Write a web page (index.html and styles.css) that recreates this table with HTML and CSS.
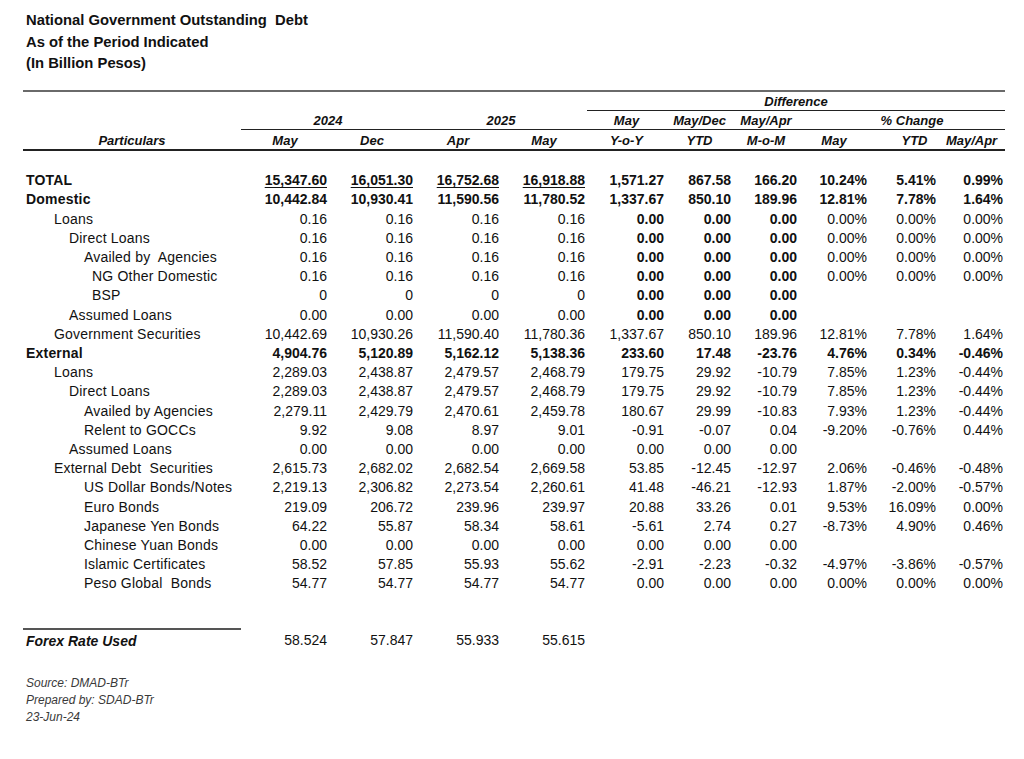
FILE: index.html
```html
<!DOCTYPE html>
<html lang="en">
<head>
<meta charset="utf-8">
<title>National Government Outstanding Debt</title>
<link rel="stylesheet" href="styles.css">
</head>
<body>
<div class="page">
  <header class="title">
    <div>National Government Outstanding&nbsp; Debt</div>
    <div>As of the Period Indicated</div>
    <div>(In Billion Pesos)</div>
  </header>

  <table class="debt">
    <colgroup>
      <col class="c-label">
      <col class="c-first">
      <col class="c-lvl">
      <col class="c-lvl">
      <col class="c-lvl">
      <col class="c-yoy">
      <col class="c-ytd">
      <col class="c-mom">
      <col class="c-p1">
      <col class="c-p2">
      <col class="c-p3">
    </colgroup>
    <thead>
      <tr class="h1">
        <th colspan="5"></th>
        <th colspan="6" class="u">Difference</th>
      </tr>
      <tr class="h2">
        <th></th>
        <th colspan="2" class="u">2024</th>
        <th colspan="2" class="u">2025</th>
        <th class="u">May</th>
        <th class="u">May/Dec</th>
        <th class="u">May/Apr</th>
        <th colspan="3" class="u pc">% Change</th>
      </tr>
      <tr class="h3">
        <th>Particulars</th>
        <th>May</th>
        <th>Dec</th>
        <th>Apr</th>
        <th>May</th>
        <th>Y-o-Y</th>
        <th>YTD</th>
        <th>M-o-M</th>
        <th>May</th>
        <th class="ytdp">YTD</th>
        <th>May/Apr</th>
      </tr>
    </thead>
    <tbody>
      <tr class="spacer"><td colspan="11"></td></tr>
      <tr class="bold total">
        <td class="l0">TOTAL</td>
        <td><span class="ul">15,347.60</span></td><td><span class="ul">16,051.30</span></td><td><span class="ul">16,752.68</span></td><td><span class="ul">16,918.88</span></td>
        <td>1,571.27</td><td>867.58</td><td>166.20</td>
        <td>10.24%</td><td>5.41%</td><td>0.99%</td>
      </tr>
      <tr class="bold">
        <td class="l0">Domestic</td>
        <td>10,442.84</td><td>10,930.41</td><td>11,590.56</td><td>11,780.52</td>
        <td>1,337.67</td><td>850.10</td><td>189.96</td>
        <td>12.81%</td><td>7.78%</td><td>1.64%</td>
      </tr>
      <tr>
        <td class="l1">Loans</td>
        <td>0.16</td><td>0.16</td><td>0.16</td><td>0.16</td>
        <td class="b">0.00</td><td class="b">0.00</td><td class="b">0.00</td>
        <td>0.00%</td><td>0.00%</td><td>0.00%</td>
      </tr>
      <tr>
        <td class="l2">Direct Loans</td>
        <td>0.16</td><td>0.16</td><td>0.16</td><td>0.16</td>
        <td class="b">0.00</td><td class="b">0.00</td><td class="b">0.00</td>
        <td>0.00%</td><td>0.00%</td><td>0.00%</td>
      </tr>
      <tr>
        <td class="l3">Availed by&nbsp; Agencies</td>
        <td>0.16</td><td>0.16</td><td>0.16</td><td>0.16</td>
        <td class="b">0.00</td><td class="b">0.00</td><td class="b">0.00</td>
        <td>0.00%</td><td>0.00%</td><td>0.00%</td>
      </tr>
      <tr>
        <td class="l4">NG Other Domestic</td>
        <td>0.16</td><td>0.16</td><td>0.16</td><td>0.16</td>
        <td class="b">0.00</td><td class="b">0.00</td><td class="b">0.00</td>
        <td>0.00%</td><td>0.00%</td><td>0.00%</td>
      </tr>
      <tr>
        <td class="l4">BSP</td>
        <td>0</td><td>0</td><td>0</td><td>0</td>
        <td class="b">0.00</td><td class="b">0.00</td><td class="b">0.00</td>
        <td></td><td></td><td></td>
      </tr>
      <tr>
        <td class="l2">Assumed Loans</td>
        <td>0.00</td><td>0.00</td><td>0.00</td><td>0.00</td>
        <td class="b">0.00</td><td class="b">0.00</td><td class="b">0.00</td>
        <td></td><td></td><td></td>
      </tr>
      <tr>
        <td class="l1">Government Securities</td>
        <td>10,442.69</td><td>10,930.26</td><td>11,590.40</td><td>11,780.36</td>
        <td>1,337.67</td><td>850.10</td><td>189.96</td>
        <td>12.81%</td><td>7.78%</td><td>1.64%</td>
      </tr>
      <tr class="bold">
        <td class="l0">External</td>
        <td>4,904.76</td><td>5,120.89</td><td>5,162.12</td><td>5,138.36</td>
        <td>233.60</td><td>17.48</td><td>-23.76</td>
        <td>4.76%</td><td>0.34%</td><td>-0.46%</td>
      </tr>
      <tr>
        <td class="l1">Loans</td>
        <td>2,289.03</td><td>2,438.87</td><td>2,479.57</td><td>2,468.79</td>
        <td>179.75</td><td>29.92</td><td>-10.79</td>
        <td>7.85%</td><td>1.23%</td><td>-0.44%</td>
      </tr>
      <tr>
        <td class="l2">Direct Loans</td>
        <td>2,289.03</td><td>2,438.87</td><td>2,479.57</td><td>2,468.79</td>
        <td>179.75</td><td>29.92</td><td>-10.79</td>
        <td>7.85%</td><td>1.23%</td><td>-0.44%</td>
      </tr>
      <tr>
        <td class="l3">Availed by Agencies</td>
        <td>2,279.11</td><td>2,429.79</td><td>2,470.61</td><td>2,459.78</td>
        <td>180.67</td><td>29.99</td><td>-10.83</td>
        <td>7.93%</td><td>1.23%</td><td>-0.44%</td>
      </tr>
      <tr>
        <td class="l3">Relent to GOCCs</td>
        <td>9.92</td><td>9.08</td><td>8.97</td><td>9.01</td>
        <td>-0.91</td><td>-0.07</td><td>0.04</td>
        <td>-9.20%</td><td>-0.76%</td><td>0.44%</td>
      </tr>
      <tr>
        <td class="l2">Assumed Loans</td>
        <td>0.00</td><td>0.00</td><td>0.00</td><td>0.00</td>
        <td>0.00</td><td>0.00</td><td>0.00</td>
        <td></td><td></td><td></td>
      </tr>
      <tr>
        <td class="l1">External Debt&nbsp; Securities</td>
        <td>2,615.73</td><td>2,682.02</td><td>2,682.54</td><td>2,669.58</td>
        <td>53.85</td><td>-12.45</td><td>-12.97</td>
        <td>2.06%</td><td>-0.46%</td><td>-0.48%</td>
      </tr>
      <tr>
        <td class="l3">US Dollar Bonds/Notes</td>
        <td>2,219.13</td><td>2,306.82</td><td>2,273.54</td><td>2,260.61</td>
        <td>41.48</td><td>-46.21</td><td>-12.93</td>
        <td>1.87%</td><td>-2.00%</td><td>-0.57%</td>
      </tr>
      <tr>
        <td class="l3">Euro Bonds</td>
        <td>219.09</td><td>206.72</td><td>239.96</td><td>239.97</td>
        <td>20.88</td><td>33.26</td><td>0.01</td>
        <td>9.53%</td><td>16.09%</td><td>0.00%</td>
      </tr>
      <tr>
        <td class="l3">Japanese Yen Bonds</td>
        <td>64.22</td><td>55.87</td><td>58.34</td><td>58.61</td>
        <td>-5.61</td><td>2.74</td><td>0.27</td>
        <td>-8.73%</td><td>4.90%</td><td>0.46%</td>
      </tr>
      <tr>
        <td class="l3">Chinese Yuan Bonds</td>
        <td>0.00</td><td>0.00</td><td>0.00</td><td>0.00</td>
        <td>0.00</td><td>0.00</td><td>0.00</td>
        <td></td><td></td><td></td>
      </tr>
      <tr>
        <td class="l3">Islamic Certificates</td>
        <td>58.52</td><td>57.85</td><td>55.93</td><td>55.62</td>
        <td>-2.91</td><td>-2.23</td><td>-0.32</td>
        <td>-4.97%</td><td>-3.86%</td><td>-0.57%</td>
      </tr>
      <tr>
        <td class="l3">Peso Global&nbsp; Bonds</td>
        <td>54.77</td><td>54.77</td><td>54.77</td><td>54.77</td>
        <td>0.00</td><td>0.00</td><td>0.00</td>
        <td>0.00%</td><td>0.00%</td><td>0.00%</td>
      </tr>
      <tr class="spacer2"><td colspan="11"></td></tr>
      <tr class="forex">
        <td class="l0 fx-label">Forex Rate Used</td>
        <td>58.524</td><td>57.847</td><td>55.933</td><td>55.615</td>
        <td></td><td></td><td></td><td></td><td></td><td></td>
      </tr>
    </tbody>
  </table>

  <footer class="notes">
    <div>Source: DMAD-BTr</div>
    <div>Prepared by: SDAD-BTr</div>
    <div>23-Jun-24</div>
  </footer>
</div>
</body>
</html>
```

FILE: styles.css
```css
* { box-sizing: border-box; }

html, body {
  margin: 0;
  padding: 0;
  background: #ffffff;
}

body {
  font-family: "Liberation Sans", Arial, sans-serif;
  color: #111;
}

.page {
  padding: 10px 0 0 23px;
  width: 1024px;
}

.title {
  padding-left: 3px;
  font-weight: bold;
  font-size: 14.8px;
  line-height: 21.5px;
}

.debt {
  margin-top: 15.5px;
  width: 982px;
  table-layout: fixed;
  border-collapse: separate;
  border-spacing: 0;
  font-size: 14px;
}

.c-label { width: 218px; }
.c-first { width: 88px; }
.c-lvl { width: 86px; }
.c-yoy { width: 79px; }
.c-ytd { width: 67px; }
.c-mom { width: 66px; }
.c-p1 { width: 70px; }
.c-p2 { width: 69px; }
.c-p3 { width: 67px; }

.debt th {
  font-weight: bold;
  font-style: italic;
  font-size: 13px;
  text-align: center;
  padding: 0;
  white-space: nowrap;
}

.h1 th {
  border-top: 2px solid #6a6a6a;
  line-height: 17px;
  padding-top: 1px;
  height: 20px;
  vertical-align: top;
}

.h1 th.u {
  border-bottom: 1px solid #222;
}

.h2 th {
  line-height: 16px;
  padding-top: 2px;
  height: 19px;
  vertical-align: top;
}

.h2 th.u {
  border-bottom: 1px solid #222;
}

.h2 th.pc {
  padding-left: 20px;
}

.h3 th {
  line-height: 16px;
  padding-top: 3px;
  height: 20px;
  vertical-align: top;
  border-bottom: 2px solid #222;
}

.h3 th.ytdp {
  padding-left: 22px;
}

.debt td {
  padding: 0 2px 0 0;
  height: 19.2px;
  line-height: 19.2px;
  text-align: right;
  white-space: nowrap;
}

.debt td.b { font-weight: bold; }

.debt tr.bold td { font-weight: bold; }

.debt td.l0, .debt td.l1, .debt td.l2, .debt td.l3, .debt td.l4 {
  text-align: left;
  letter-spacing: 0.2px;
}
.debt td.l0 { padding-left: 3px; }
.debt td.l1 { padding-left: 31px; }
.debt td.l2 { padding-left: 46px; }
.debt td.l3 { padding-left: 61px; }
.debt td.l4 { padding-left: 69px; }

.ul {
  text-decoration: underline;
  text-underline-offset: 2px;
  text-decoration-thickness: 1px;
}

.debt tr.spacer td { height: 20.2px; line-height: 1px; }
.debt tr.spacer2 td { height: 34px; line-height: 1px; }

.debt tr.forex td {
  padding-top: 2px;
  height: 21px;
}

.debt td.fx-label {
  border-top: 2px solid #555;
  font-weight: bold;
  font-style: italic;
  letter-spacing: 0;
}

.notes {
  margin-top: 24px;
  padding-left: 3px;
  font-size: 12px;
  font-style: italic;
  line-height: 17px;
  color: #3a3a3a;
}
```
